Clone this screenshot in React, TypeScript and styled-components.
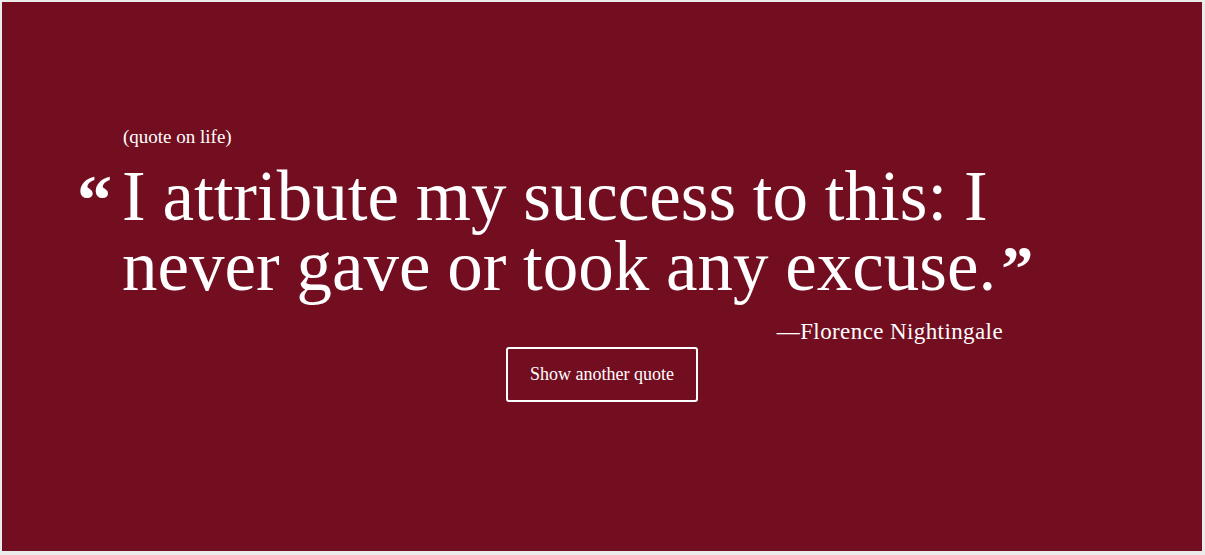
import React from "react";
import styled, { createGlobalStyle } from "styled-components";

const Global = createGlobalStyle`
  html, body { margin: 0; padding: 0; background: #ececec; }
  * { box-sizing: border-box; }
`;

const Page = styled.div`
  padding: 2px 3px 4px 2px;
  height: 555px;
`;

const Card = styled.main`
  height: 549px;
  background: #730e21;
  color: #fff;
  font-family: "Liberation Serif", "Times New Roman", serif;
  padding: 123px 0 0 75px;
  display: flex;
  flex-direction: column;
`;

const Content = styled.div`
  width: 1004px;
  display: flex;
  flex-direction: column;
`;

const Topic = styled.div`
  margin-left: 46px;
  font-size: 19px;
  line-height: 24px;
`;

const QuoteRow = styled.blockquote`
  margin: 12px 0 0 0;
  display: flex;
  align-items: flex-start;
`;

const OpenMark = styled.span`
  width: 45px;
  flex: none;
  font-size: 70px;
  font-weight: bold;
  line-height: 70px;
  padding-top: 4px;
`;

const QuoteText = styled.p`
  margin: 0;
  width: 959px;
  font-size: 71px;
  line-height: 70px;
  word-spacing: -1px;
`;

const CloseMark = styled.span`
  font-size: 64px;
  line-height: 10px;
  font-weight: bold;
  margin-left: 5px;
`;

const Author = styled.div`
  align-self: flex-end;
  margin-right: 78px;
  font-size: 23px;
  line-height: 26px;
  margin-top: 18px;
  letter-spacing: 0.4px;
`;

const Button = styled.button`
  align-self: center;
  margin-top: 2px;
  margin-right: 75px;
  width: 192px;
  height: 55px;
  background: transparent;
  border: 2px solid #fff;
  border-radius: 3px;
  color: #fff;
  font-family: "Liberation Serif", "Times New Roman", serif;
  font-size: 18px;
  cursor: pointer;
`;

export default function App() {
  return (
    <>
      <Global />
      <Page>
        <Card>
          <Content>
            <Topic>(quote on life)</Topic>
            <QuoteRow>
              <OpenMark>“</OpenMark>
              <QuoteText>
                I attribute my success to this: I never gave or took any excuse.
                <CloseMark>”</CloseMark>
              </QuoteText>
            </QuoteRow>
            <Author>—Florence Nightingale</Author>
          </Content>
          <Button>Show another quote</Button>
        </Card>
      </Page>
    </>
  );
}
